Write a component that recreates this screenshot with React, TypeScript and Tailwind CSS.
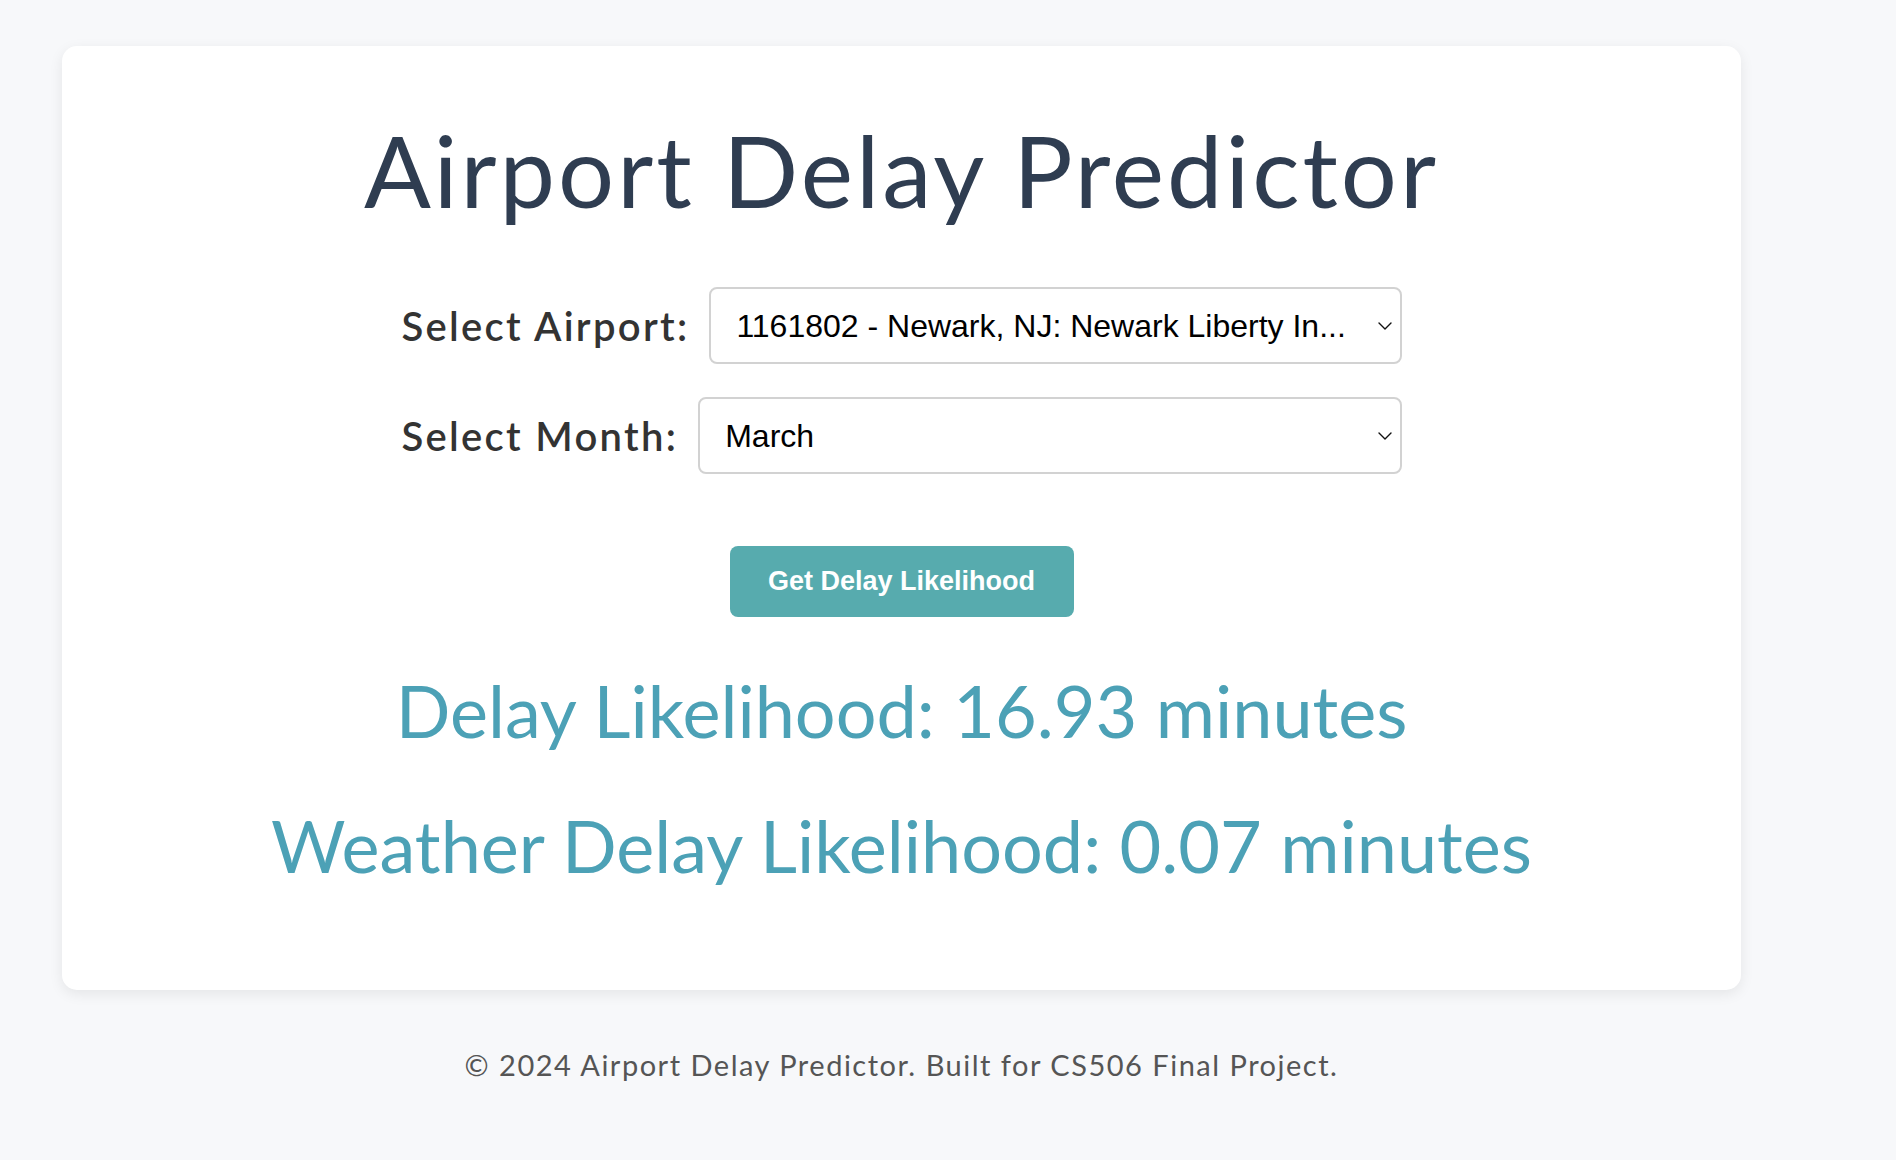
import React, { useState } from 'react';

const months = [
  'January', 'February', 'March', 'April', 'May', 'June',
  'July', 'August', 'September', 'October', 'November', 'December',
];

function Chevron() {
  return (
    <svg
      className="pointer-events-none absolute right-[10px] top-1/2 -translate-y-1/2"
      width="14"
      height="8"
      viewBox="0 0 14 8"
      fill="none"
    >
      <path d="M1 1l6 6 6-6" stroke="#111" strokeWidth="1.4" strokeLinecap="round" strokeLinejoin="round" />
    </svg>
  );
}

function Field({ label, value, options, onChange }: { label: string; value: string; options: string[]; onChange: (v: string) => void }) {
  return (
    <div className="flex items-center w-[1000px] gap-[20px]">
      <label className="text-[40px] font-semibold text-[#333] whitespace-nowrap tracking-[2.3px]">{label}</label>
      <div className="relative flex-1">
        <select
          value={value}
          onChange={(e) => onChange(e.target.value)}
          className="appearance-none w-full h-[77px] pl-[25px] pr-[40px] bg-white border-2 border-[#d2d2d2] rounded-[8px] text-[32px] text-black font-['Liberation_Sans',Arial,sans-serif] outline-none"
        >
          {options.map((o) => (
            <option key={o} value={o}>{o}</option>
          ))}
        </select>
        <Chevron />
      </div>
    </div>
  );
}

export default function App() {
  const [airport, setAirport] = useState('1161802 - Newark, NJ: Newark Liberty In...');
  const [month, setMonth] = useState('March');

  return (
    <div className="min-h-screen bg-[#f7f8fa] pt-[46px] font-['Lato','Noto_Sans',sans-serif]">
      <div className="ml-[62px] w-[1679px] h-[944px] bg-white rounded-[15px] shadow-[0_4px_14px_rgba(0,0,0,0.08)] flex flex-col items-center pt-[74px]">
        <h1 className="text-[99px] leading-none text-[#2f3d51] font-normal tracking-[3px]">Airport Delay Predictor</h1>

        <div className="flex flex-col items-center gap-[33px] mt-[68px]">
          <Field label="Select Airport:" value={airport} options={[airport]} onChange={setAirport} />
          <Field label="Select Month:" value={month} options={months} onChange={setMonth} />
        </div>

        <button className="mt-[72px] w-[344px] h-[71px] rounded-[8px] bg-[#57abae] text-white text-[27px] font-bold font-['Liberation_Sans',Arial,sans-serif]">
          Get Delay Likelihood
        </button>

        <p className="mt-[57px] text-[72px] leading-none text-[#4ca1b6]">Delay Likelihood: 16.93 minutes</p>
        <p className="mt-[63px] text-[72px] leading-none text-[#4ca1b6]">Weather Delay Likelihood: 0.07 minutes</p>
      </div>

      <footer className="w-[1679px] ml-[62px] text-center mt-[53px] text-[29px] text-[#555] tracking-[1.5px]">
        © 2024 Airport Delay Predictor. Built for CS506 Final Project.
      </footer>
    </div>
  );
}
